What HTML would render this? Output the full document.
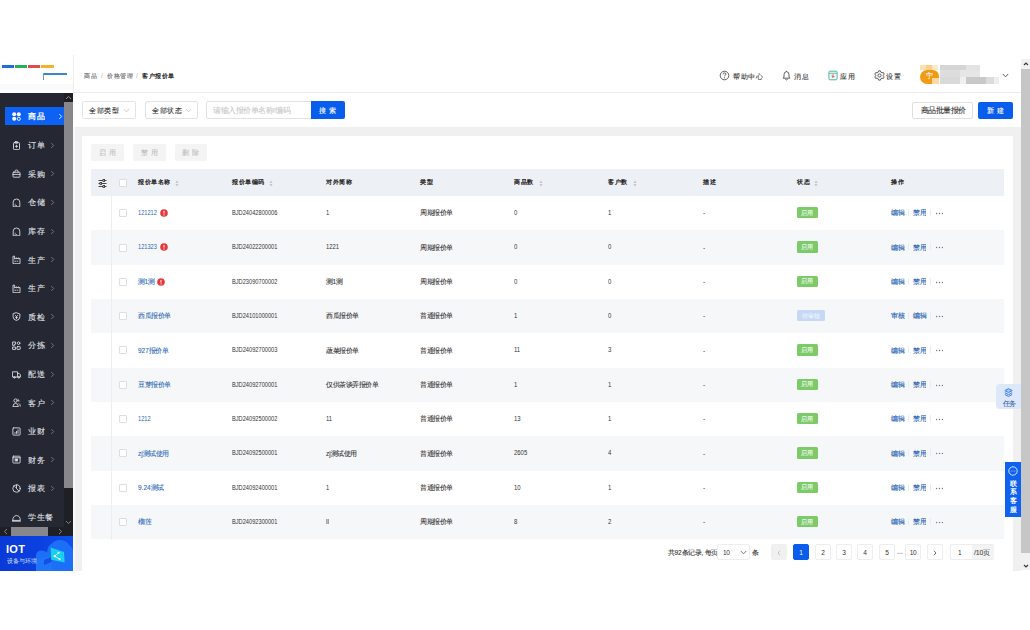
<!DOCTYPE html>
<html><head><meta charset="utf-8">
<style>
*{box-sizing:border-box;margin:0;padding:0}
html,body{width:1030px;height:630px;overflow:hidden;background:#fff;font-family:"Liberation Sans",sans-serif;color:#333}
.a{position:absolute}
.z{transform:scale(.5);transform-origin:0 0;white-space:nowrap}
.zc{transform:translateX(-50%) scale(.5);transform-origin:50% 0;white-space:nowrap}
</style></head><body>
<div class="a" style="left:0px;top:55px;width:73px;height:38px;background:#fff;"></div>
<div class="a" style="left:2px;top:65px;width:12px;height:3px;background:#1f6fd6;"></div>
<div class="a" style="left:15px;top:65px;width:12px;height:3px;background:#22b35a;"></div>
<div class="a" style="left:28px;top:65px;width:12px;height:3px;background:#e34b4b;"></div>
<div class="a" style="left:41px;top:65px;width:13px;height:3px;background:#f3b22b;"></div>
<div class="a" style="left:43px;top:73.2px;width:24px;height:1.6px;background:#3a86c8;"></div>
<div class="a" style="left:43px;top:73.2px;width:1px;height:6.5px;background:#5a9ad0;"></div>
<div class="a" style="left:0px;top:83.5px;width:73px;height:6.5px;background:#fafafa;"></div>
<div class="a" style="left:73px;top:55px;width:1px;height:38px;background:#ededed;"></div>
<div class="a" style="left:0px;top:93px;width:73px;height:434px;background:#252832;"></div>
<div class="a" style="left:64px;top:93px;width:9px;height:434px;background:#1e2026;"></div>
<div class="a" style="left:64px;top:102px;width:9px;height:386px;background:#87878c;"></div>
<svg class="a" style="left:65px;top:95px" width="7" height="5" viewBox="0 0 7 5"><path d="M1 4L3.5 1.4L6 4" stroke="#9a9aa0" stroke-width="0.9" fill="none"/></svg>
<svg class="a" style="left:65px;top:520px" width="7" height="5" viewBox="0 0 7 5"><path d="M1 1L3.5 3.6L6 1" stroke="#8a8a90" stroke-width="0.9" fill="none"/></svg>
<div class="a" style="left:0px;top:527px;width:73px;height:9px;background:#1e2026;"></div>
<div class="a" style="left:10.5px;top:527px;width:37.5px;height:9px;background:#87878c;"></div>
<svg class="a" style="left:3px;top:528px" width="5" height="7" viewBox="0 0 5 7"><path d="M4 1L1.4 3.5L4 6" stroke="#8a8a90" stroke-width="0.9" fill="none"/></svg>
<svg class="a" style="left:58px;top:528px" width="5" height="7" viewBox="0 0 5 7"><path d="M1 1L3.6 3.5L1 6" stroke="#8a8a90" stroke-width="0.9" fill="none"/></svg>
<div class="a" style="left:5px;top:107px;width:59px;height:18px;background:#0d62f5;"></div>
<svg class="a" style="left:12px;top:111.5px" width="9" height="9" viewBox="0 0 9 9"><circle cx="2.2" cy="2.2" r="2" fill="#fff"/><circle cx="6.8" cy="2.2" r="2" fill="#fff"/><circle cx="2.2" cy="6.8" r="2" fill="#fff"/><circle cx="6.8" cy="6.8" r="1.6" fill="none" stroke="#fff" stroke-width=".9"/></svg>
<div class="a z " style="left:27.5px;top:109.05px;font-size:16.80px;line-height:27px;color:#fff;font-weight:bold;letter-spacing:0.00px;">商品</div>
<svg class="a" style="left:58px;top:112.8px" width="5" height="7" viewBox="0 0 5 7"><path d="M1.3 1.1L3.7 3.5L1.3 5.9" stroke="#fff" stroke-width="0.85" fill="none"/></svg>
<svg class="a" style="left:12px;top:140.8px" width="9" height="9" viewBox="0 0 9 9"><g stroke="#d8dbe2" stroke-width="0.9" fill="none" stroke-linecap="round" stroke-linejoin="round"><rect x="1.5" y="1.6" width="6" height="7" rx="0.8"/><rect x="3.2" y="0.6" width="2.6" height="1.6" rx="0.4"/><path d="M4.5 4.2V6.4M3.4 5.3H5.6"/></g></svg>
<div class="a z " style="left:27.5px;top:138.15px;font-size:16.80px;line-height:27px;color:#e2e4ea;font-weight:500;letter-spacing:0.00px;;-webkit-text-stroke:0.18px currentColor">订单</div>
<svg class="a" style="left:50px;top:141.8px" width="5" height="7" viewBox="0 0 5 7"><path d="M1.3 1.1L3.7 3.5L1.3 5.9" stroke="#80838c" stroke-width="0.85" fill="none"/></svg>
<svg class="a" style="left:12px;top:169.4px" width="9" height="9" viewBox="0 0 9 9"><g stroke="#d8dbe2" stroke-width="0.9" fill="none" stroke-linecap="round" stroke-linejoin="round"><path d="M3 3.2V2.2Q3 1 4.5 1Q6 1 6 2.2V3.2"/><rect x="1" y="3.2" width="7" height="5" rx="0.6"/><path d="M1 5.4H8"/></g></svg>
<div class="a z " style="left:27.5px;top:166.75px;font-size:16.80px;line-height:27px;color:#e2e4ea;font-weight:500;letter-spacing:0.00px;;-webkit-text-stroke:0.18px currentColor">采购</div>
<svg class="a" style="left:50px;top:170.4px" width="5" height="7" viewBox="0 0 5 7"><path d="M1.3 1.1L3.7 3.5L1.3 5.9" stroke="#80838c" stroke-width="0.85" fill="none"/></svg>
<svg class="a" style="left:12px;top:198.0px" width="9" height="9" viewBox="0 0 9 9"><g stroke="#d8dbe2" stroke-width="0.9" fill="none" stroke-linecap="round" stroke-linejoin="round"><path d="M1.2 8.4V4.2Q1.2 1 4.5 1Q7.8 1 7.8 4.2V8.4z"/><path d="M3.2 6.2V6.3M3.2 7.6V7.7M4.5 7.6V7.7"/></g></svg>
<div class="a z " style="left:27.5px;top:195.35px;font-size:16.80px;line-height:27px;color:#e2e4ea;font-weight:500;letter-spacing:0.00px;;-webkit-text-stroke:0.18px currentColor">仓储</div>
<svg class="a" style="left:50px;top:199.0px" width="5" height="7" viewBox="0 0 5 7"><path d="M1.3 1.1L3.7 3.5L1.3 5.9" stroke="#80838c" stroke-width="0.85" fill="none"/></svg>
<svg class="a" style="left:12px;top:226.6px" width="9" height="9" viewBox="0 0 9 9"><g stroke="#d8dbe2" stroke-width="0.9" fill="none" stroke-linecap="round" stroke-linejoin="round"><path d="M1.2 8.4V4.2Q1.2 1 4.5 1Q7.8 1 7.8 4.2V8.4z"/><path d="M3.2 6.2V6.3M3.2 7.6V7.7M4.5 7.6V7.7"/></g></svg>
<div class="a z " style="left:27.5px;top:223.95px;font-size:16.80px;line-height:27px;color:#e2e4ea;font-weight:500;letter-spacing:0.00px;;-webkit-text-stroke:0.18px currentColor">库存</div>
<svg class="a" style="left:50px;top:227.6px" width="5" height="7" viewBox="0 0 5 7"><path d="M1.3 1.1L3.7 3.5L1.3 5.9" stroke="#80838c" stroke-width="0.85" fill="none"/></svg>
<svg class="a" style="left:12px;top:255.2px" width="9" height="9" viewBox="0 0 9 9"><g stroke="#d8dbe2" stroke-width="0.9" fill="none" stroke-linecap="round" stroke-linejoin="round"><path d="M1 8.3V1.2H2.6V4L4.6 2.8V4L6.6 2.8V4L8 3.4V8.3z"/><path d="M2.8 6.2H3.6M5 6.2H5.8"/></g></svg>
<div class="a z " style="left:27.5px;top:252.55px;font-size:16.80px;line-height:27px;color:#e2e4ea;font-weight:500;letter-spacing:0.00px;;-webkit-text-stroke:0.18px currentColor">生产</div>
<svg class="a" style="left:50px;top:256.2px" width="5" height="7" viewBox="0 0 5 7"><path d="M1.3 1.1L3.7 3.5L1.3 5.9" stroke="#80838c" stroke-width="0.85" fill="none"/></svg>
<svg class="a" style="left:12px;top:283.8px" width="9" height="9" viewBox="0 0 9 9"><g stroke="#d8dbe2" stroke-width="0.9" fill="none" stroke-linecap="round" stroke-linejoin="round"><path d="M1 8.3V1.2H2.6V4L4.6 2.8V4L6.6 2.8V4L8 3.4V8.3z"/><path d="M2.8 6.2H3.6M5 6.2H5.8"/></g></svg>
<div class="a z " style="left:27.5px;top:281.15px;font-size:16.80px;line-height:27px;color:#e2e4ea;font-weight:500;letter-spacing:0.00px;;-webkit-text-stroke:0.18px currentColor">生产</div>
<svg class="a" style="left:50px;top:284.8px" width="5" height="7" viewBox="0 0 5 7"><path d="M1.3 1.1L3.7 3.5L1.3 5.9" stroke="#80838c" stroke-width="0.85" fill="none"/></svg>
<svg class="a" style="left:12px;top:312.4px" width="9" height="9" viewBox="0 0 9 9"><g stroke="#d8dbe2" stroke-width="0.9" fill="none" stroke-linecap="round" stroke-linejoin="round"><path d="M4.5 0.8L7.9 2V4.8Q7.9 7.5 4.5 8.6Q1.1 7.5 1.1 4.8V2z"/><path d="M3.4 3.4L4.5 4.6L5.6 3.4M4.5 4.6V6.8M3.6 5.4H5.4"/></g></svg>
<div class="a z " style="left:27.5px;top:309.75px;font-size:16.80px;line-height:27px;color:#e2e4ea;font-weight:500;letter-spacing:0.00px;;-webkit-text-stroke:0.18px currentColor">质检</div>
<svg class="a" style="left:50px;top:313.4px" width="5" height="7" viewBox="0 0 5 7"><path d="M1.3 1.1L3.7 3.5L1.3 5.9" stroke="#80838c" stroke-width="0.85" fill="none"/></svg>
<svg class="a" style="left:12px;top:341.0px" width="9" height="9" viewBox="0 0 9 9"><g stroke="#d8dbe2" stroke-width="0.9" fill="none" stroke-linecap="round" stroke-linejoin="round"><path d="M1 1H3.6V3.2H2.4V4.4H1z"/><circle cx="6.6" cy="2.2" r="1.3"/><rect x="1" y="6" width="2.6" height="2.4"/><rect x="5" y="5.6" width="3.2" height="2.8" rx="0.4"/></g></svg>
<div class="a z " style="left:27.5px;top:338.35px;font-size:16.80px;line-height:27px;color:#e2e4ea;font-weight:500;letter-spacing:0.00px;;-webkit-text-stroke:0.18px currentColor">分拣</div>
<svg class="a" style="left:50px;top:342.0px" width="5" height="7" viewBox="0 0 5 7"><path d="M1.3 1.1L3.7 3.5L1.3 5.9" stroke="#80838c" stroke-width="0.85" fill="none"/></svg>
<svg class="a" style="left:12px;top:369.6px" width="9" height="9" viewBox="0 0 9 9"><g stroke="#d8dbe2" stroke-width="0.9" fill="none" stroke-linecap="round" stroke-linejoin="round"><path d="M0.8 1.8H5.6V7H0.8z"/><path d="M5.6 3.4H7.2L8.4 4.8V7H5.6"/><circle cx="2.4" cy="7.4" r="0.8"/><circle cx="6.8" cy="7.4" r="0.8"/></g></svg>
<div class="a z " style="left:27.5px;top:366.95px;font-size:16.80px;line-height:27px;color:#e2e4ea;font-weight:500;letter-spacing:0.00px;;-webkit-text-stroke:0.18px currentColor">配送</div>
<svg class="a" style="left:50px;top:370.6px" width="5" height="7" viewBox="0 0 5 7"><path d="M1.3 1.1L3.7 3.5L1.3 5.9" stroke="#80838c" stroke-width="0.85" fill="none"/></svg>
<svg class="a" style="left:12px;top:398.2px" width="9" height="9" viewBox="0 0 9 9"><g stroke="#d8dbe2" stroke-width="0.9" fill="none" stroke-linecap="round" stroke-linejoin="round"><circle cx="3.6" cy="2.6" r="1.7"/><path d="M0.9 8.2Q1 5.4 3.6 5.4Q6.2 5.4 6.3 8.2z"/><path d="M6 1.2Q7.2 1.6 7 3.4M7.2 5.6Q8.3 6.2 8.3 8.2"/></g></svg>
<div class="a z " style="left:27.5px;top:395.55px;font-size:16.80px;line-height:27px;color:#e2e4ea;font-weight:500;letter-spacing:0.00px;;-webkit-text-stroke:0.18px currentColor">客户</div>
<svg class="a" style="left:50px;top:399.2px" width="5" height="7" viewBox="0 0 5 7"><path d="M1.3 1.1L3.7 3.5L1.3 5.9" stroke="#80838c" stroke-width="0.85" fill="none"/></svg>
<svg class="a" style="left:12px;top:426.8px" width="9" height="9" viewBox="0 0 9 9"><g stroke="#d8dbe2" stroke-width="0.9" fill="none" stroke-linecap="round" stroke-linejoin="round"><rect x="0.9" y="0.9" width="7.2" height="7.2" rx="0.6"/><path d="M3 6.4V5.6M4.5 6.4V4.4M6 6.4V2.8"/></g></svg>
<div class="a z " style="left:27.5px;top:424.15px;font-size:16.80px;line-height:27px;color:#e2e4ea;font-weight:500;letter-spacing:0.00px;;-webkit-text-stroke:0.18px currentColor">业财</div>
<svg class="a" style="left:50px;top:427.8px" width="5" height="7" viewBox="0 0 5 7"><path d="M1.3 1.1L3.7 3.5L1.3 5.9" stroke="#80838c" stroke-width="0.85" fill="none"/></svg>
<svg class="a" style="left:12px;top:455.4px" width="9" height="9" viewBox="0 0 9 9"><g stroke="#d8dbe2" stroke-width="0.9" fill="none" stroke-linecap="round" stroke-linejoin="round"><rect x="0.9" y="1.2" width="7.2" height="6.8" rx="0.6"/><path d="M0.9 2.8H8.1"/><rect x="3.5" y="4" width="2" height="2" fill="#d8dbe2"/></g></svg>
<div class="a z " style="left:27.5px;top:452.75px;font-size:16.80px;line-height:27px;color:#e2e4ea;font-weight:500;letter-spacing:0.00px;;-webkit-text-stroke:0.18px currentColor">财务</div>
<svg class="a" style="left:50px;top:456.4px" width="5" height="7" viewBox="0 0 5 7"><path d="M1.3 1.1L3.7 3.5L1.3 5.9" stroke="#80838c" stroke-width="0.85" fill="none"/></svg>
<svg class="a" style="left:12px;top:484.0px" width="9" height="9" viewBox="0 0 9 9"><g stroke="#d8dbe2" stroke-width="0.9" fill="none" stroke-linecap="round" stroke-linejoin="round"><circle cx="4.5" cy="4.5" r="3.7"/><path d="M4.5 0.8V4.5L7 7.1"/><path d="M4.5 4.5L2.2 2" stroke-width="0.6"/></g></svg>
<div class="a z " style="left:27.5px;top:481.35px;font-size:16.80px;line-height:27px;color:#e2e4ea;font-weight:500;letter-spacing:0.00px;;-webkit-text-stroke:0.18px currentColor">报表</div>
<svg class="a" style="left:50px;top:485.0px" width="5" height="7" viewBox="0 0 5 7"><path d="M1.3 1.1L3.7 3.5L1.3 5.9" stroke="#80838c" stroke-width="0.85" fill="none"/></svg>
<svg class="a" style="left:12px;top:512.6px" width="9" height="9" viewBox="0 0 9 9"><g stroke="#d8dbe2" stroke-width="0.9" fill="none" stroke-linecap="round" stroke-linejoin="round"><path d="M0.7 7.4H8.3Q8.1 2.6 4.5 2.6Q0.9 2.6 0.7 7.4z"/><path d="M0.5 8.2H8.5"/></g></svg>
<div class="a z " style="left:27.5px;top:509.95px;font-size:16.80px;line-height:27px;color:#e2e4ea;font-weight:500;letter-spacing:0.00px;;-webkit-text-stroke:0.18px currentColor">学生餐</div>
<div class="a" style="left:0;top:536px;width:73px;height:35px;background:linear-gradient(90deg,#0a3ad6 0%,#0b40e0 55%,#0f50ee 100%);overflow:hidden">
<svg class="a" style="left:0;top:0" width="73" height="35" viewBox="0 0 73 35">
<path d="M36 35V20Q36 14.5 41.5 14.5Q45 14.5 47 16.5Q47.5 9.5 52 7.5Q54.5 4 60 4Q66.5 4 69.5 9.5Q73 11 73 16V35z" fill="#1c6ff6"/>
<path d="M36 35V24Q40 22 46 21L52 19V35z" fill="#2178fa" opacity="0.7"/>
<path d="M44 24L51.5 21V26L44 29z" fill="#0c47dc" opacity="0.8"/>
<path d="M50.6 11.6L64 16L64.7 26.6L51.2 23.7z" fill="#17d0ec"/>
<g stroke="#e9fbff" stroke-width="0.9" fill="none"><path d="M54.6 20.2L58.6 16.8M54.6 20.2L59.6 23"/></g>
<g fill="#fff"><circle cx="54.6" cy="20.2" r="1.1"/><circle cx="58.6" cy="16.8" r="1"/><circle cx="59.6" cy="23" r="1"/></g>
</svg></div>
<div class="a z " style="left:6.3px;top:540.25px;font-size:22.00px;line-height:35px;color:#fff;font-weight:bold;letter-spacing:0.60px;">IOT</div>
<div class="a z " style="left:7px;top:556.00px;font-size:12.40px;line-height:20px;color:#d6e0ff;font-weight:500;letter-spacing:0.00px;-webkit-text-stroke:0">设备与环境</div>
<div class="a" style="left:74px;top:55px;width:947px;height:37px;background:#fff;"></div>
<div class="a" style="left:74px;top:92px;width:947px;height:1px;background:#ececec;"></div>
<div class="a z " style="left:84px;top:71.00px;font-size:12.80px;line-height:20px;color:#6e6e6e;font-weight:500;letter-spacing:0.00px;-webkit-text-stroke:0.3px currentColor">商品</div>
<div class="a z " style="left:100.5px;top:71.00px;font-size:12.80px;line-height:20px;color:#b0b0b0;font-weight:500;letter-spacing:0.00px;">/</div>
<div class="a z " style="left:107px;top:71.00px;font-size:12.80px;line-height:20px;color:#6e6e6e;font-weight:500;letter-spacing:0.00px;-webkit-text-stroke:0.3px currentColor">价格管理</div>
<div class="a z " style="left:135.5px;top:71.00px;font-size:12.80px;line-height:20px;color:#b0b0b0;font-weight:500;letter-spacing:0.00px;">/</div>
<div class="a z " style="left:142px;top:71.00px;font-size:12.80px;line-height:20px;color:#1d1d1d;font-weight:500;letter-spacing:0.00px;-webkit-text-stroke:0.5px currentColor">客户报价单</div>
<svg class="a" style="left:719px;top:70px" width="11" height="11" viewBox="0 0 11 11"><circle cx="5.5" cy="5.5" r="4.3" fill="none" stroke="#3a3a3a" stroke-width="0.8"/><path d="M4.1 4.3Q4.1 2.9 5.5 2.9Q6.9 2.9 6.9 4.1Q6.9 4.9 5.9 5.4Q5.5 5.6 5.5 6.3" fill="none" stroke="#3a3a3a" stroke-width="0.8"/><circle cx="5.5" cy="7.7" r=".5" fill="#3a3a3a"/></svg>
<div class="a z " style="left:733px;top:69.60px;font-size:14.90px;line-height:24px;color:#2e2e2e;font-weight:500;letter-spacing:0.00px;;-webkit-text-stroke:0.18px currentColor">帮助中心</div>
<svg class="a" style="left:782px;top:70px" width="9" height="11" viewBox="0 0 9 11"><path d="M1.2 8.2H7.8L7 7V4.6Q7 2 4.5 1.6Q2 2 2 4.6V7z" fill="none" stroke="#3a3a3a" stroke-width="0.8" stroke-linejoin="round"/><path d="M3.4 9.4Q4.5 10.4 5.6 9.4" fill="none" stroke="#3a3a3a" stroke-width="0.8"/><path d="M4.5 0.8V1.6" stroke="#3a3a3a" stroke-width="0.8"/></svg>
<div class="a z " style="left:794px;top:69.60px;font-size:14.90px;line-height:24px;color:#2e2e2e;font-weight:500;letter-spacing:0.00px;;-webkit-text-stroke:0.18px currentColor">消息</div>
<svg class="a" style="left:828px;top:70px" width="10" height="11" viewBox="0 0 10 11"><rect x="0.9" y="1.2" width="8.2" height="8.6" rx="1" fill="#eef9f6" stroke="#3fb49b" stroke-width="0.9"/><path d="M0.9 3.3H9.1" stroke="#3fb49b" stroke-width="0.8"/><path d="M5 4.4V7.2M3.6 6L5 7.4L6.4 6" fill="none" stroke="#e5484d" stroke-width="1"/></svg>
<div class="a z " style="left:840px;top:69.60px;font-size:14.90px;line-height:24px;color:#2e2e2e;font-weight:500;letter-spacing:0.00px;;-webkit-text-stroke:0.18px currentColor">应用</div>
<svg class="a" style="left:874px;top:70px" width="11" height="11" viewBox="0 0 11 11"><path d="M4.6 0.9H6.4L6.8 2.2L8 2.9L9.3 2.5L10.2 4.1L9.2 5.1V5.9L10.2 6.9L9.3 8.5L8 8.1L6.8 8.8L6.4 10.1H4.6L4.2 8.8L3 8.1L1.7 8.5L0.8 6.9L1.8 5.9V5.1L0.8 4.1L1.7 2.5L3 2.9L4.2 2.2z" fill="none" stroke="#3a3a3a" stroke-width="0.8" stroke-linejoin="round"/><circle cx="5.5" cy="5.5" r="1.6" fill="none" stroke="#3a3a3a" stroke-width="0.8"/></svg>
<div class="a z " style="left:886px;top:69.60px;font-size:14.90px;line-height:24px;color:#2e2e2e;font-weight:500;letter-spacing:0.00px;;-webkit-text-stroke:0.18px currentColor">设置</div>
<div class="a" style="left:920px;top:65px;width:6px;height:5px;background:#fbe0b3;"></div>
<div class="a" style="left:926px;top:65px;width:6px;height:5px;background:#f9cf8a;"></div>
<div class="a" style="left:932px;top:65px;width:6px;height:5px;background:#fde9c8;"></div>
<div class="a" style="left:940px;top:65px;width:26px;height:5px;background:#d5d5d5;"></div>
<div class="a" style="left:966px;top:65px;width:14px;height:5px;background:#e3e3e3;"></div>
<div class="a" style="left:940px;top:70px;width:20px;height:7px;background:#dddddd;"></div>
<div class="a" style="left:960px;top:70px;width:20px;height:7px;background:#e6e6e6;"></div>
<div class="a" style="left:940px;top:77px;width:20px;height:7px;background:#d9d9d9;"></div>
<div class="a" style="left:960px;top:77px;width:6px;height:7px;background:#f0f0f0;"></div>
<div class="a" style="left:966px;top:77px;width:20px;height:7px;background:#c9c9c9;"></div>
<div class="a" style="left:986px;top:77px;width:8px;height:7px;background:#dcdcdc;"></div>
<div class="a" style="left:994px;top:77px;width:5px;height:7px;background:#eeeeee;"></div>
<div class="a" style="left:920px;top:70px;width:19px;height:14px;background:#f29a12;border-radius:8px 7px 2px 8px"></div>
<div class="a" style="left:932px;top:78px;width:7px;height:6px;background:#fbd9a6;"></div>
<div class="a z " style="left:926px;top:70.00px;font-size:14.00px;line-height:22px;color:#fff;font-weight:500;letter-spacing:0.00px;;-webkit-text-stroke:0.18px currentColor">宁</div>
<svg class="a" style="left:1002px;top:73px" width="7" height="5" viewBox="0 0 7 5"><path d="M0.8 1L3.5 3.8L6.2 1" stroke="#444" stroke-width="0.9" fill="none"/></svg>
<div class="a" style="left:74px;top:93px;width:947px;height:34px;background:#fff;"></div>
<div class="a" style="left:82px;top:101px;width:54px;height:17.5px;border:1px solid #e4e4e4;border-radius:1.5px"></div>
<div class="a z " style="left:89px;top:104.85px;font-size:14.60px;line-height:23px;color:#262626;font-weight:500;letter-spacing:0.00px;;-webkit-text-stroke:0.18px currentColor">全部类型</div>
<svg class="a" style="left:123px;top:107.5px" width="7" height="5" viewBox="0 0 7 5"><path d="M0.8 1L3.5 3.8L6.2 1" stroke="#b8b8b8" stroke-width="0.7" fill="none"/></svg>
<div class="a" style="left:145px;top:101px;width:53px;height:17.5px;border:1px solid #e2e2e2;border-radius:2px"></div>
<div class="a z " style="left:152px;top:104.85px;font-size:14.60px;line-height:23px;color:#262626;font-weight:500;letter-spacing:0.00px;;-webkit-text-stroke:0.18px currentColor">全部状态</div>
<svg class="a" style="left:185px;top:107.5px" width="7" height="5" viewBox="0 0 7 5"><path d="M0.8 1L3.5 3.8L6.2 1" stroke="#b8b8b8" stroke-width="0.7" fill="none"/></svg>
<div class="a" style="left:206px;top:101px;width:106px;height:17.5px;border:1px solid #e2e2e2;border-radius:2px 0 0 2px"></div>
<div class="a z " style="left:213px;top:104.40px;font-size:15.00px;line-height:24px;color:#c8c8c8;font-weight:500;letter-spacing:0.00px;;-webkit-text-stroke:0.18px currentColor">请输入报价单名称/编码</div>
<div class="a" style="left:311px;top:101px;width:34px;height:17.5px;background:#095ded;border-radius:0 2px 2px 0"></div>
<div class="a zc" style="left:328.4px;top:104.50px;font-size:13.60px;line-height:22px;color:#fff;font-weight:500;letter-spacing:1.40px;;-webkit-text-stroke:0.18px currentColor">搜&nbsp;索</div>
<div class="a" style="left:912px;top:101.5px;width:61px;height:17.5px;border:1px solid #e0e0e0;border-radius:2px;background:#fff"></div>
<div class="a zc" style="left:942.5px;top:104.30px;font-size:15.00px;line-height:24px;color:#2a2a2a;font-weight:500;letter-spacing:0.00px;;-webkit-text-stroke:0.18px currentColor">商品批量报价</div>
<div class="a" style="left:978px;top:101.5px;width:35px;height:17.5px;background:#095ded;border-radius:2px"></div>
<div class="a zc" style="left:995.7px;top:104.80px;font-size:13.60px;line-height:22px;color:#fff;font-weight:500;letter-spacing:1.40px;;-webkit-text-stroke:0.18px currentColor">新&nbsp;建</div>
<div class="a" style="left:74px;top:127px;width:947px;height:444px;background:#f0f0f1;"></div>
<div class="a" style="left:73px;top:127px;width:2px;height:444px;background:#f8f8f8;"></div>
<div class="a" style="left:82px;top:136px;width:931px;height:435px;background:#fff;"></div>
<div class="a" style="left:91px;top:144px;width:33px;height:17px;background:#f4f4f4;border-radius:2px"></div>
<div class="a zc" style="left:107.5px;top:147.25px;font-size:13.20px;line-height:21px;color:#bdbdbd;font-weight:500;letter-spacing:2.00px;;-webkit-text-stroke:0.18px currentColor">启&nbsp;用</div>
<div class="a" style="left:133px;top:144px;width:33px;height:17px;background:#f4f4f4;border-radius:2px"></div>
<div class="a zc" style="left:149.5px;top:147.25px;font-size:13.20px;line-height:21px;color:#bdbdbd;font-weight:500;letter-spacing:2.00px;;-webkit-text-stroke:0.18px currentColor">禁&nbsp;用</div>
<div class="a" style="left:175px;top:144px;width:32px;height:17px;background:#f4f4f4;border-radius:2px"></div>
<div class="a zc" style="left:191.0px;top:147.25px;font-size:13.20px;line-height:21px;color:#bdbdbd;font-weight:500;letter-spacing:2.00px;;-webkit-text-stroke:0.18px currentColor">删&nbsp;除</div>
<div class="a" style="left:91px;top:169.3px;width:913px;height:26.7px;background:#edf0f5;"></div>
<svg class="a" style="left:98px;top:178.5px" width="9" height="9" viewBox="0 0 9 9"><g stroke="#333" stroke-width="0.9" fill="none"><path d="M0.5 1.5H8.5M0.5 4.5H8.5M0.5 7.5H8.5"/></g><g fill="#edf0f5" stroke="#333" stroke-width="0.8"><rect x="5" y="0.5" width="1.6" height="2"/><rect x="2" y="3.5" width="1.6" height="2"/><rect x="5" y="6.5" width="1.6" height="2"/></g></svg>
<div class="a" style="left:119px;top:178.7px;width:8px;height:8px;border:1px solid #dedede;background:#fff;border-radius:1px"></div>
<div class="a z " style="left:138px;top:177.40px;font-size:12.80px;line-height:20px;color:#1f1f1f;font-weight:500;letter-spacing:0.00px;-webkit-text-stroke:0.55px currentColor">报价单名称</div>
<svg class="a" style="left:175.3px;top:179.5px" width="4" height="7" viewBox="0 0 4 7"><path d="M2 0.6L3.6 2.9H0.4z M2 6.4L3.6 4.1H0.4z" fill="#c2c6ce"/></svg>
<div class="a z " style="left:232px;top:177.40px;font-size:12.80px;line-height:20px;color:#1f1f1f;font-weight:500;letter-spacing:0.00px;-webkit-text-stroke:0.55px currentColor">报价单编码</div>
<svg class="a" style="left:268.5px;top:179.5px" width="4" height="7" viewBox="0 0 4 7"><path d="M2 0.6L3.6 2.9H0.4z M2 6.4L3.6 4.1H0.4z" fill="#c2c6ce"/></svg>
<div class="a z " style="left:326px;top:177.40px;font-size:12.80px;line-height:20px;color:#1f1f1f;font-weight:500;letter-spacing:0.00px;-webkit-text-stroke:0.55px currentColor">对外简称</div>
<div class="a z " style="left:420px;top:177.40px;font-size:12.80px;line-height:20px;color:#1f1f1f;font-weight:500;letter-spacing:0.00px;-webkit-text-stroke:0.55px currentColor">类型</div>
<div class="a z " style="left:514px;top:177.40px;font-size:12.80px;line-height:20px;color:#1f1f1f;font-weight:500;letter-spacing:0.00px;-webkit-text-stroke:0.55px currentColor">商品数</div>
<svg class="a" style="left:538.5px;top:179.5px" width="4" height="7" viewBox="0 0 4 7"><path d="M2 0.6L3.6 2.9H0.4z M2 6.4L3.6 4.1H0.4z" fill="#c2c6ce"/></svg>
<div class="a z " style="left:608px;top:177.40px;font-size:12.80px;line-height:20px;color:#1f1f1f;font-weight:500;letter-spacing:0.00px;-webkit-text-stroke:0.55px currentColor">客户数</div>
<svg class="a" style="left:632.7px;top:179.5px" width="4" height="7" viewBox="0 0 4 7"><path d="M2 0.6L3.6 2.9H0.4z M2 6.4L3.6 4.1H0.4z" fill="#c2c6ce"/></svg>
<div class="a z " style="left:703px;top:177.40px;font-size:12.80px;line-height:20px;color:#1f1f1f;font-weight:500;letter-spacing:0.00px;-webkit-text-stroke:0.55px currentColor">描述</div>
<div class="a z " style="left:797px;top:177.40px;font-size:12.80px;line-height:20px;color:#1f1f1f;font-weight:500;letter-spacing:0.00px;-webkit-text-stroke:0.55px currentColor">状态</div>
<svg class="a" style="left:814.3px;top:179.5px" width="4" height="7" viewBox="0 0 4 7"><path d="M2 0.6L3.6 2.9H0.4z M2 6.4L3.6 4.1H0.4z" fill="#c2c6ce"/></svg>
<div class="a z " style="left:891px;top:177.40px;font-size:12.80px;line-height:20px;color:#1f1f1f;font-weight:500;letter-spacing:0.00px;-webkit-text-stroke:0.55px currentColor">操作</div>
<div class="a" style="left:119px;top:209.2px;width:8px;height:8px;border:1px solid #dedede;background:#fff;border-radius:1px"></div>
<div class="a z " style="left:138px;top:207.16px;font-size:14.00px;line-height:22px;color:#2c69b6;font-weight:500;letter-spacing:0.00px;;transform:scale(0.4050,.5)">121212</div>
<svg class="a" style="left:160px;top:208.86px" width="8" height="8" viewBox="0 0 8 8"><circle cx="4" cy="4" r="3.8" fill="#e5393c"/><path d="M4 1.9V4.6" stroke="#fff" stroke-width="1"/><circle cx="4" cy="5.9" r=".55" fill="#fff"/></svg>
<div class="a z " style="left:232px;top:207.16px;font-size:14.00px;line-height:22px;color:#333;font-weight:500;letter-spacing:0.00px;;transform:scale(0.4050,.5)">BJD24042800006</div>
<div class="a z " style="left:326px;top:207.16px;font-size:14.00px;line-height:22px;color:#333;font-weight:500;letter-spacing:0.00px;;transform:scale(0.4150,.5)">1</div>
<div class="a z " style="left:420px;top:207.41px;font-size:13.00px;line-height:21px;color:#333;font-weight:500;letter-spacing:0.00px;;-webkit-text-stroke:0.18px currentColor">周期报价单</div>
<div class="a z " style="left:514px;top:207.16px;font-size:14.00px;line-height:22px;color:#333;font-weight:500;letter-spacing:0.00px;;transform:scale(0.4250,.5)">0</div>
<div class="a z " style="left:608px;top:207.16px;font-size:14.00px;line-height:22px;color:#333;font-weight:500;letter-spacing:0.00px;;transform:scale(0.4250,.5)">1</div>
<div class="a z " style="left:703px;top:207.41px;font-size:13.00px;line-height:21px;color:#333;font-weight:500;letter-spacing:0.00px;">-</div>
<div class="a" style="left:796.5px;top:206.96px;width:21.5px;height:11.5px;background:#7cca68;border-radius:1.5px"></div>
<div class="a zc" style="left:807.25px;top:207.66px;font-size:12.40px;line-height:20px;color:#f4fbf1;font-weight:500;letter-spacing:0.00px;;-webkit-text-stroke:0.18px currentColor">启用</div>
<div class="a z " style="left:891px;top:207.41px;font-size:13.00px;line-height:21px;color:#2c69b6;font-weight:500;letter-spacing:0.00px;-webkit-text-stroke:0.3px currentColor">编辑</div>
<div class="a" style="left:908.3px;top:209.16px;width:1px;height:7px;background:#ececec;"></div>
<div class="a z " style="left:913px;top:207.41px;font-size:13.00px;line-height:21px;color:#2c69b6;font-weight:500;letter-spacing:0.00px;-webkit-text-stroke:0.3px currentColor">禁用</div>
<div class="a" style="left:930px;top:209.16px;width:1px;height:7px;background:#ececec;"></div>
<svg class="a" style="left:935px;top:211.96px" width="9" height="3" viewBox="0 0 9 3"><g fill="#6a7487"><circle cx="1.6" cy="1.5" r=".65"/><circle cx="4.5" cy="1.5" r=".65"/><circle cx="7.4" cy="1.5" r=".65"/></g></svg>
<div class="a" style="left:91px;top:230.32px;width:913px;height:34.32px;background:#f6f7f9;"></div>
<div class="a" style="left:119px;top:243.5px;width:8px;height:8px;border:1px solid #dedede;background:#fff;border-radius:1px"></div>
<div class="a z " style="left:138px;top:241.48px;font-size:14.00px;line-height:22px;color:#2c69b6;font-weight:500;letter-spacing:0.00px;;transform:scale(0.4050,.5)">121323</div>
<svg class="a" style="left:160px;top:243.18px" width="8" height="8" viewBox="0 0 8 8"><circle cx="4" cy="4" r="3.8" fill="#e5393c"/><path d="M4 1.9V4.6" stroke="#fff" stroke-width="1"/><circle cx="4" cy="5.9" r=".55" fill="#fff"/></svg>
<div class="a z " style="left:232px;top:241.48px;font-size:14.00px;line-height:22px;color:#333;font-weight:500;letter-spacing:0.00px;;transform:scale(0.4050,.5)">BJD24022200001</div>
<div class="a z " style="left:326px;top:241.48px;font-size:14.00px;line-height:22px;color:#333;font-weight:500;letter-spacing:0.00px;;transform:scale(0.4150,.5)">1221</div>
<div class="a z " style="left:420px;top:241.73px;font-size:13.00px;line-height:21px;color:#333;font-weight:500;letter-spacing:0.00px;;-webkit-text-stroke:0.18px currentColor">周期报价单</div>
<div class="a z " style="left:514px;top:241.48px;font-size:14.00px;line-height:22px;color:#333;font-weight:500;letter-spacing:0.00px;;transform:scale(0.4250,.5)">0</div>
<div class="a z " style="left:608px;top:241.48px;font-size:14.00px;line-height:22px;color:#333;font-weight:500;letter-spacing:0.00px;;transform:scale(0.4250,.5)">0</div>
<div class="a z " style="left:703px;top:241.73px;font-size:13.00px;line-height:21px;color:#333;font-weight:500;letter-spacing:0.00px;">-</div>
<div class="a" style="left:796.5px;top:241.28px;width:21.5px;height:11.5px;background:#7cca68;border-radius:1.5px"></div>
<div class="a zc" style="left:807.25px;top:241.98px;font-size:12.40px;line-height:20px;color:#f4fbf1;font-weight:500;letter-spacing:0.00px;;-webkit-text-stroke:0.18px currentColor">启用</div>
<div class="a z " style="left:891px;top:241.73px;font-size:13.00px;line-height:21px;color:#2c69b6;font-weight:500;letter-spacing:0.00px;-webkit-text-stroke:0.3px currentColor">编辑</div>
<div class="a" style="left:908.3px;top:243.48px;width:1px;height:7px;background:#ececec;"></div>
<div class="a z " style="left:913px;top:241.73px;font-size:13.00px;line-height:21px;color:#2c69b6;font-weight:500;letter-spacing:0.00px;-webkit-text-stroke:0.3px currentColor">禁用</div>
<div class="a" style="left:930px;top:243.48px;width:1px;height:7px;background:#ececec;"></div>
<svg class="a" style="left:935px;top:246.28px" width="9" height="3" viewBox="0 0 9 3"><g fill="#6a7487"><circle cx="1.6" cy="1.5" r=".65"/><circle cx="4.5" cy="1.5" r=".65"/><circle cx="7.4" cy="1.5" r=".65"/></g></svg>
<div class="a" style="left:119px;top:277.8px;width:8px;height:8px;border:1px solid #dedede;background:#fff;border-radius:1px"></div>
<div class="a z " style="left:138px;top:276.05px;font-size:13.00px;line-height:21px;color:#2c69b6;font-weight:500;letter-spacing:0.00px;;-webkit-text-stroke:0.18px currentColor">测1测</div>
<svg class="a" style="left:157px;top:277.50px" width="8" height="8" viewBox="0 0 8 8"><circle cx="4" cy="4" r="3.8" fill="#e5393c"/><path d="M4 1.9V4.6" stroke="#fff" stroke-width="1"/><circle cx="4" cy="5.9" r=".55" fill="#fff"/></svg>
<div class="a z " style="left:232px;top:275.80px;font-size:14.00px;line-height:22px;color:#333;font-weight:500;letter-spacing:0.00px;;transform:scale(0.4050,.5)">BJD23090700002</div>
<div class="a z " style="left:326px;top:276.05px;font-size:13.00px;line-height:21px;color:#333;font-weight:500;letter-spacing:0.00px;;-webkit-text-stroke:0.18px currentColor">测1测</div>
<div class="a z " style="left:420px;top:276.05px;font-size:13.00px;line-height:21px;color:#333;font-weight:500;letter-spacing:0.00px;;-webkit-text-stroke:0.18px currentColor">周期报价单</div>
<div class="a z " style="left:514px;top:275.80px;font-size:14.00px;line-height:22px;color:#333;font-weight:500;letter-spacing:0.00px;;transform:scale(0.4250,.5)">0</div>
<div class="a z " style="left:608px;top:275.80px;font-size:14.00px;line-height:22px;color:#333;font-weight:500;letter-spacing:0.00px;;transform:scale(0.4250,.5)">0</div>
<div class="a z " style="left:703px;top:276.05px;font-size:13.00px;line-height:21px;color:#333;font-weight:500;letter-spacing:0.00px;">-</div>
<div class="a" style="left:796.5px;top:275.60px;width:21.5px;height:11.5px;background:#7cca68;border-radius:1.5px"></div>
<div class="a zc" style="left:807.25px;top:276.30px;font-size:12.40px;line-height:20px;color:#f4fbf1;font-weight:500;letter-spacing:0.00px;;-webkit-text-stroke:0.18px currentColor">启用</div>
<div class="a z " style="left:891px;top:276.05px;font-size:13.00px;line-height:21px;color:#2c69b6;font-weight:500;letter-spacing:0.00px;-webkit-text-stroke:0.3px currentColor">编辑</div>
<div class="a" style="left:908.3px;top:277.80px;width:1px;height:7px;background:#ececec;"></div>
<div class="a z " style="left:913px;top:276.05px;font-size:13.00px;line-height:21px;color:#2c69b6;font-weight:500;letter-spacing:0.00px;-webkit-text-stroke:0.3px currentColor">禁用</div>
<div class="a" style="left:930px;top:277.80px;width:1px;height:7px;background:#ececec;"></div>
<svg class="a" style="left:935px;top:280.60px" width="9" height="3" viewBox="0 0 9 3"><g fill="#6a7487"><circle cx="1.6" cy="1.5" r=".65"/><circle cx="4.5" cy="1.5" r=".65"/><circle cx="7.4" cy="1.5" r=".65"/></g></svg>
<div class="a" style="left:91px;top:298.96px;width:913px;height:34.32px;background:#f6f7f9;"></div>
<div class="a" style="left:119px;top:312.1px;width:8px;height:8px;border:1px solid #dedede;background:#fff;border-radius:1px"></div>
<div class="a z " style="left:138px;top:310.37px;font-size:13.00px;line-height:21px;color:#2c69b6;font-weight:500;letter-spacing:0.00px;;-webkit-text-stroke:0.18px currentColor">西瓜报价单</div>
<div class="a z " style="left:232px;top:310.12px;font-size:14.00px;line-height:22px;color:#333;font-weight:500;letter-spacing:0.00px;;transform:scale(0.4050,.5)">BJD24101000001</div>
<div class="a z " style="left:326px;top:310.37px;font-size:13.00px;line-height:21px;color:#333;font-weight:500;letter-spacing:0.00px;;-webkit-text-stroke:0.18px currentColor">西瓜报价单</div>
<div class="a z " style="left:420px;top:310.37px;font-size:13.00px;line-height:21px;color:#333;font-weight:500;letter-spacing:0.00px;;-webkit-text-stroke:0.18px currentColor">普通报价单</div>
<div class="a z " style="left:514px;top:310.12px;font-size:14.00px;line-height:22px;color:#333;font-weight:500;letter-spacing:0.00px;;transform:scale(0.4250,.5)">1</div>
<div class="a z " style="left:608px;top:310.12px;font-size:14.00px;line-height:22px;color:#333;font-weight:500;letter-spacing:0.00px;;transform:scale(0.4250,.5)">0</div>
<div class="a z " style="left:703px;top:310.37px;font-size:13.00px;line-height:21px;color:#333;font-weight:500;letter-spacing:0.00px;">-</div>
<div class="a" style="left:796.5px;top:309.92px;width:28px;height:11.5px;background:#c5d8f6;border-radius:1.5px"></div>
<div class="a zc" style="left:810.5px;top:310.62px;font-size:12.40px;line-height:20px;color:#eef4fd;font-weight:500;letter-spacing:0.00px;;-webkit-text-stroke:0.18px currentColor">待审核</div>
<div class="a z " style="left:891px;top:310.37px;font-size:13.00px;line-height:21px;color:#2c69b6;font-weight:500;letter-spacing:0.00px;-webkit-text-stroke:0.3px currentColor">审核</div>
<div class="a" style="left:908.3px;top:312.12px;width:1px;height:7px;background:#ececec;"></div>
<div class="a z " style="left:913px;top:310.37px;font-size:13.00px;line-height:21px;color:#2c69b6;font-weight:500;letter-spacing:0.00px;-webkit-text-stroke:0.3px currentColor">编辑</div>
<div class="a" style="left:930px;top:312.12px;width:1px;height:7px;background:#ececec;"></div>
<svg class="a" style="left:935px;top:314.92px" width="9" height="3" viewBox="0 0 9 3"><g fill="#6a7487"><circle cx="1.6" cy="1.5" r=".65"/><circle cx="4.5" cy="1.5" r=".65"/><circle cx="7.4" cy="1.5" r=".65"/></g></svg>
<div class="a" style="left:119px;top:346.4px;width:8px;height:8px;border:1px solid #dedede;background:#fff;border-radius:1px"></div>
<div class="a z " style="left:138px;top:344.69px;font-size:13.00px;line-height:21px;color:#2c69b6;font-weight:500;letter-spacing:0.00px;;-webkit-text-stroke:0.18px currentColor">927报价单</div>
<div class="a z " style="left:232px;top:344.44px;font-size:14.00px;line-height:22px;color:#333;font-weight:500;letter-spacing:0.00px;;transform:scale(0.4050,.5)">BJD24092700003</div>
<div class="a z " style="left:326px;top:344.69px;font-size:13.00px;line-height:21px;color:#333;font-weight:500;letter-spacing:0.00px;;-webkit-text-stroke:0.18px currentColor">蔬菜报价单</div>
<div class="a z " style="left:420px;top:344.69px;font-size:13.00px;line-height:21px;color:#333;font-weight:500;letter-spacing:0.00px;;-webkit-text-stroke:0.18px currentColor">普通报价单</div>
<div class="a z " style="left:514px;top:344.44px;font-size:14.00px;line-height:22px;color:#333;font-weight:500;letter-spacing:0.00px;;transform:scale(0.4250,.5)">11</div>
<div class="a z " style="left:608px;top:344.44px;font-size:14.00px;line-height:22px;color:#333;font-weight:500;letter-spacing:0.00px;;transform:scale(0.4250,.5)">3</div>
<div class="a z " style="left:703px;top:344.69px;font-size:13.00px;line-height:21px;color:#333;font-weight:500;letter-spacing:0.00px;">-</div>
<div class="a" style="left:796.5px;top:344.24px;width:21.5px;height:11.5px;background:#7cca68;border-radius:1.5px"></div>
<div class="a zc" style="left:807.25px;top:344.94px;font-size:12.40px;line-height:20px;color:#f4fbf1;font-weight:500;letter-spacing:0.00px;;-webkit-text-stroke:0.18px currentColor">启用</div>
<div class="a z " style="left:891px;top:344.69px;font-size:13.00px;line-height:21px;color:#2c69b6;font-weight:500;letter-spacing:0.00px;-webkit-text-stroke:0.3px currentColor">编辑</div>
<div class="a" style="left:908.3px;top:346.44px;width:1px;height:7px;background:#ececec;"></div>
<div class="a z " style="left:913px;top:344.69px;font-size:13.00px;line-height:21px;color:#2c69b6;font-weight:500;letter-spacing:0.00px;-webkit-text-stroke:0.3px currentColor">禁用</div>
<div class="a" style="left:930px;top:346.44px;width:1px;height:7px;background:#ececec;"></div>
<svg class="a" style="left:935px;top:349.24px" width="9" height="3" viewBox="0 0 9 3"><g fill="#6a7487"><circle cx="1.6" cy="1.5" r=".65"/><circle cx="4.5" cy="1.5" r=".65"/><circle cx="7.4" cy="1.5" r=".65"/></g></svg>
<div class="a" style="left:91px;top:367.60px;width:913px;height:34.32px;background:#f6f7f9;"></div>
<div class="a" style="left:119px;top:380.8px;width:8px;height:8px;border:1px solid #dedede;background:#fff;border-radius:1px"></div>
<div class="a z " style="left:138px;top:379.01px;font-size:13.00px;line-height:21px;color:#2c69b6;font-weight:500;letter-spacing:0.00px;;-webkit-text-stroke:0.18px currentColor">豆芽报价单</div>
<div class="a z " style="left:232px;top:378.76px;font-size:14.00px;line-height:22px;color:#333;font-weight:500;letter-spacing:0.00px;;transform:scale(0.4050,.5)">BJD24092700001</div>
<div class="a z " style="left:326px;top:379.01px;font-size:13.00px;line-height:21px;color:#333;font-weight:500;letter-spacing:0.00px;;-webkit-text-stroke:0.18px currentColor">仅供茶谈弄报价单</div>
<div class="a z " style="left:420px;top:379.01px;font-size:13.00px;line-height:21px;color:#333;font-weight:500;letter-spacing:0.00px;;-webkit-text-stroke:0.18px currentColor">普通报价单</div>
<div class="a z " style="left:514px;top:378.76px;font-size:14.00px;line-height:22px;color:#333;font-weight:500;letter-spacing:0.00px;;transform:scale(0.4250,.5)">1</div>
<div class="a z " style="left:608px;top:378.76px;font-size:14.00px;line-height:22px;color:#333;font-weight:500;letter-spacing:0.00px;;transform:scale(0.4250,.5)">1</div>
<div class="a z " style="left:703px;top:379.01px;font-size:13.00px;line-height:21px;color:#333;font-weight:500;letter-spacing:0.00px;">-</div>
<div class="a" style="left:796.5px;top:378.56px;width:21.5px;height:11.5px;background:#7cca68;border-radius:1.5px"></div>
<div class="a zc" style="left:807.25px;top:379.26px;font-size:12.40px;line-height:20px;color:#f4fbf1;font-weight:500;letter-spacing:0.00px;;-webkit-text-stroke:0.18px currentColor">启用</div>
<div class="a z " style="left:891px;top:379.01px;font-size:13.00px;line-height:21px;color:#2c69b6;font-weight:500;letter-spacing:0.00px;-webkit-text-stroke:0.3px currentColor">编辑</div>
<div class="a" style="left:908.3px;top:380.76px;width:1px;height:7px;background:#ececec;"></div>
<div class="a z " style="left:913px;top:379.01px;font-size:13.00px;line-height:21px;color:#2c69b6;font-weight:500;letter-spacing:0.00px;-webkit-text-stroke:0.3px currentColor">禁用</div>
<div class="a" style="left:930px;top:380.76px;width:1px;height:7px;background:#ececec;"></div>
<svg class="a" style="left:935px;top:383.56px" width="9" height="3" viewBox="0 0 9 3"><g fill="#6a7487"><circle cx="1.6" cy="1.5" r=".65"/><circle cx="4.5" cy="1.5" r=".65"/><circle cx="7.4" cy="1.5" r=".65"/></g></svg>
<div class="a" style="left:119px;top:415.1px;width:8px;height:8px;border:1px solid #dedede;background:#fff;border-radius:1px"></div>
<div class="a z " style="left:138px;top:413.08px;font-size:14.00px;line-height:22px;color:#2c69b6;font-weight:500;letter-spacing:0.00px;;transform:scale(0.4050,.5)">1212</div>
<div class="a z " style="left:232px;top:413.08px;font-size:14.00px;line-height:22px;color:#333;font-weight:500;letter-spacing:0.00px;;transform:scale(0.4050,.5)">BJD24092500002</div>
<div class="a z " style="left:326px;top:413.08px;font-size:14.00px;line-height:22px;color:#333;font-weight:500;letter-spacing:0.00px;;transform:scale(0.4150,.5)">11</div>
<div class="a z " style="left:420px;top:413.33px;font-size:13.00px;line-height:21px;color:#333;font-weight:500;letter-spacing:0.00px;;-webkit-text-stroke:0.18px currentColor">普通报价单</div>
<div class="a z " style="left:514px;top:413.08px;font-size:14.00px;line-height:22px;color:#333;font-weight:500;letter-spacing:0.00px;;transform:scale(0.4250,.5)">13</div>
<div class="a z " style="left:608px;top:413.08px;font-size:14.00px;line-height:22px;color:#333;font-weight:500;letter-spacing:0.00px;;transform:scale(0.4250,.5)">1</div>
<div class="a z " style="left:703px;top:413.33px;font-size:13.00px;line-height:21px;color:#333;font-weight:500;letter-spacing:0.00px;">-</div>
<div class="a" style="left:796.5px;top:412.88px;width:21.5px;height:11.5px;background:#7cca68;border-radius:1.5px"></div>
<div class="a zc" style="left:807.25px;top:413.58px;font-size:12.40px;line-height:20px;color:#f4fbf1;font-weight:500;letter-spacing:0.00px;;-webkit-text-stroke:0.18px currentColor">启用</div>
<div class="a z " style="left:891px;top:413.33px;font-size:13.00px;line-height:21px;color:#2c69b6;font-weight:500;letter-spacing:0.00px;-webkit-text-stroke:0.3px currentColor">编辑</div>
<div class="a" style="left:908.3px;top:415.08px;width:1px;height:7px;background:#ececec;"></div>
<div class="a z " style="left:913px;top:413.33px;font-size:13.00px;line-height:21px;color:#2c69b6;font-weight:500;letter-spacing:0.00px;-webkit-text-stroke:0.3px currentColor">禁用</div>
<div class="a" style="left:930px;top:415.08px;width:1px;height:7px;background:#ececec;"></div>
<svg class="a" style="left:935px;top:417.88px" width="9" height="3" viewBox="0 0 9 3"><g fill="#6a7487"><circle cx="1.6" cy="1.5" r=".65"/><circle cx="4.5" cy="1.5" r=".65"/><circle cx="7.4" cy="1.5" r=".65"/></g></svg>
<div class="a" style="left:91px;top:436.24px;width:913px;height:34.32px;background:#f6f7f9;"></div>
<div class="a" style="left:119px;top:449.4px;width:8px;height:8px;border:1px solid #dedede;background:#fff;border-radius:1px"></div>
<div class="a z " style="left:138px;top:447.65px;font-size:13.00px;line-height:21px;color:#2c69b6;font-weight:500;letter-spacing:0.00px;;-webkit-text-stroke:0.18px currentColor">zj测试使用</div>
<div class="a z " style="left:232px;top:447.40px;font-size:14.00px;line-height:22px;color:#333;font-weight:500;letter-spacing:0.00px;;transform:scale(0.4050,.5)">BJD24092500001</div>
<div class="a z " style="left:326px;top:447.65px;font-size:13.00px;line-height:21px;color:#333;font-weight:500;letter-spacing:0.00px;;-webkit-text-stroke:0.18px currentColor">zj测试使用</div>
<div class="a z " style="left:420px;top:447.65px;font-size:13.00px;line-height:21px;color:#333;font-weight:500;letter-spacing:0.00px;;-webkit-text-stroke:0.18px currentColor">普通报价单</div>
<div class="a z " style="left:514px;top:447.40px;font-size:14.00px;line-height:22px;color:#333;font-weight:500;letter-spacing:0.00px;;transform:scale(0.4250,.5)">2605</div>
<div class="a z " style="left:608px;top:447.40px;font-size:14.00px;line-height:22px;color:#333;font-weight:500;letter-spacing:0.00px;;transform:scale(0.4250,.5)">4</div>
<div class="a z " style="left:703px;top:447.65px;font-size:13.00px;line-height:21px;color:#333;font-weight:500;letter-spacing:0.00px;">-</div>
<div class="a" style="left:796.5px;top:447.20px;width:21.5px;height:11.5px;background:#7cca68;border-radius:1.5px"></div>
<div class="a zc" style="left:807.25px;top:447.90px;font-size:12.40px;line-height:20px;color:#f4fbf1;font-weight:500;letter-spacing:0.00px;;-webkit-text-stroke:0.18px currentColor">启用</div>
<div class="a z " style="left:891px;top:447.65px;font-size:13.00px;line-height:21px;color:#2c69b6;font-weight:500;letter-spacing:0.00px;-webkit-text-stroke:0.3px currentColor">编辑</div>
<div class="a" style="left:908.3px;top:449.40px;width:1px;height:7px;background:#ececec;"></div>
<div class="a z " style="left:913px;top:447.65px;font-size:13.00px;line-height:21px;color:#2c69b6;font-weight:500;letter-spacing:0.00px;-webkit-text-stroke:0.3px currentColor">禁用</div>
<div class="a" style="left:930px;top:449.40px;width:1px;height:7px;background:#ececec;"></div>
<svg class="a" style="left:935px;top:452.20px" width="9" height="3" viewBox="0 0 9 3"><g fill="#6a7487"><circle cx="1.6" cy="1.5" r=".65"/><circle cx="4.5" cy="1.5" r=".65"/><circle cx="7.4" cy="1.5" r=".65"/></g></svg>
<div class="a" style="left:119px;top:483.7px;width:8px;height:8px;border:1px solid #dedede;background:#fff;border-radius:1px"></div>
<div class="a z " style="left:138px;top:481.97px;font-size:13.00px;line-height:21px;color:#2c69b6;font-weight:500;letter-spacing:0.00px;;-webkit-text-stroke:0.18px currentColor">9.24测试</div>
<div class="a z " style="left:232px;top:481.72px;font-size:14.00px;line-height:22px;color:#333;font-weight:500;letter-spacing:0.00px;;transform:scale(0.4050,.5)">BJD24092400001</div>
<div class="a z " style="left:326px;top:481.72px;font-size:14.00px;line-height:22px;color:#333;font-weight:500;letter-spacing:0.00px;;transform:scale(0.4150,.5)">1</div>
<div class="a z " style="left:420px;top:481.97px;font-size:13.00px;line-height:21px;color:#333;font-weight:500;letter-spacing:0.00px;;-webkit-text-stroke:0.18px currentColor">普通报价单</div>
<div class="a z " style="left:514px;top:481.72px;font-size:14.00px;line-height:22px;color:#333;font-weight:500;letter-spacing:0.00px;;transform:scale(0.4250,.5)">10</div>
<div class="a z " style="left:608px;top:481.72px;font-size:14.00px;line-height:22px;color:#333;font-weight:500;letter-spacing:0.00px;;transform:scale(0.4250,.5)">1</div>
<div class="a z " style="left:703px;top:481.97px;font-size:13.00px;line-height:21px;color:#333;font-weight:500;letter-spacing:0.00px;">-</div>
<div class="a" style="left:796.5px;top:481.52px;width:21.5px;height:11.5px;background:#7cca68;border-radius:1.5px"></div>
<div class="a zc" style="left:807.25px;top:482.22px;font-size:12.40px;line-height:20px;color:#f4fbf1;font-weight:500;letter-spacing:0.00px;;-webkit-text-stroke:0.18px currentColor">启用</div>
<div class="a z " style="left:891px;top:481.97px;font-size:13.00px;line-height:21px;color:#2c69b6;font-weight:500;letter-spacing:0.00px;-webkit-text-stroke:0.3px currentColor">编辑</div>
<div class="a" style="left:908.3px;top:483.72px;width:1px;height:7px;background:#ececec;"></div>
<div class="a z " style="left:913px;top:481.97px;font-size:13.00px;line-height:21px;color:#2c69b6;font-weight:500;letter-spacing:0.00px;-webkit-text-stroke:0.3px currentColor">禁用</div>
<div class="a" style="left:930px;top:483.72px;width:1px;height:7px;background:#ececec;"></div>
<svg class="a" style="left:935px;top:486.52px" width="9" height="3" viewBox="0 0 9 3"><g fill="#6a7487"><circle cx="1.6" cy="1.5" r=".65"/><circle cx="4.5" cy="1.5" r=".65"/><circle cx="7.4" cy="1.5" r=".65"/></g></svg>
<div class="a" style="left:91px;top:504.88px;width:913px;height:34.32px;background:#f6f7f9;"></div>
<div class="a" style="left:119px;top:518.0px;width:8px;height:8px;border:1px solid #dedede;background:#fff;border-radius:1px"></div>
<div class="a z " style="left:138px;top:516.29px;font-size:13.00px;line-height:21px;color:#2c69b6;font-weight:500;letter-spacing:0.00px;;-webkit-text-stroke:0.18px currentColor">榴莲</div>
<div class="a z " style="left:232px;top:516.04px;font-size:14.00px;line-height:22px;color:#333;font-weight:500;letter-spacing:0.00px;;transform:scale(0.4050,.5)">BJD24092300001</div>
<div class="a z " style="left:326px;top:516.29px;font-size:13.00px;line-height:21px;color:#333;font-weight:500;letter-spacing:0.00px;">ll</div>
<div class="a z " style="left:420px;top:516.29px;font-size:13.00px;line-height:21px;color:#333;font-weight:500;letter-spacing:0.00px;;-webkit-text-stroke:0.18px currentColor">周期报价单</div>
<div class="a z " style="left:514px;top:516.04px;font-size:14.00px;line-height:22px;color:#333;font-weight:500;letter-spacing:0.00px;;transform:scale(0.4250,.5)">8</div>
<div class="a z " style="left:608px;top:516.04px;font-size:14.00px;line-height:22px;color:#333;font-weight:500;letter-spacing:0.00px;;transform:scale(0.4250,.5)">2</div>
<div class="a z " style="left:703px;top:516.29px;font-size:13.00px;line-height:21px;color:#333;font-weight:500;letter-spacing:0.00px;">-</div>
<div class="a" style="left:796.5px;top:515.84px;width:21.5px;height:11.5px;background:#7cca68;border-radius:1.5px"></div>
<div class="a zc" style="left:807.25px;top:516.54px;font-size:12.40px;line-height:20px;color:#f4fbf1;font-weight:500;letter-spacing:0.00px;;-webkit-text-stroke:0.18px currentColor">启用</div>
<div class="a z " style="left:891px;top:516.29px;font-size:13.00px;line-height:21px;color:#2c69b6;font-weight:500;letter-spacing:0.00px;-webkit-text-stroke:0.3px currentColor">编辑</div>
<div class="a" style="left:908.3px;top:518.04px;width:1px;height:7px;background:#ececec;"></div>
<div class="a z " style="left:913px;top:516.29px;font-size:13.00px;line-height:21px;color:#2c69b6;font-weight:500;letter-spacing:0.00px;-webkit-text-stroke:0.3px currentColor">禁用</div>
<div class="a" style="left:930px;top:518.04px;width:1px;height:7px;background:#ececec;"></div>
<svg class="a" style="left:935px;top:520.84px" width="9" height="3" viewBox="0 0 9 3"><g fill="#6a7487"><circle cx="1.6" cy="1.5" r=".65"/><circle cx="4.5" cy="1.5" r=".65"/><circle cx="7.4" cy="1.5" r=".65"/></g></svg>
<div class="a" style="left:111px;top:170px;width:1px;height:370px;background:#eceef2;"></div>
<div class="a z " style="left:668px;top:546.75px;font-size:13.00px;line-height:21px;color:#333;font-weight:500;letter-spacing:0.00px;;-webkit-text-stroke:0.18px currentColor">共92条记录, 每页</div>
<div class="a" style="left:717px;top:544px;width:33px;height:16px;border:1px solid #ededed;border-radius:2px;background:#fff"></div>
<div class="a z " style="left:723px;top:546.75px;font-size:13.00px;line-height:21px;color:#333;font-weight:500;letter-spacing:-0.60px;">10</div>
<svg class="a" style="left:740px;top:549.5px" width="7" height="5" viewBox="0 0 7 5"><path d="M0.8 1L3.5 3.8L6.2 1" stroke="#555" stroke-width="0.8" fill="none"/></svg>
<div class="a z " style="left:752px;top:546.75px;font-size:13.00px;line-height:21px;color:#333;font-weight:500;letter-spacing:0.00px;;-webkit-text-stroke:0.18px currentColor">条</div>
<div class="a" style="left:771px;top:544px;width:16px;height:16px;border:1px solid #f0f0f0;border-radius:2px;background:#f0f0f0"></div>
<div class="a zc" style="left:779px;top:546.75px;font-size:13.00px;line-height:21px;color:#b0b0b0;font-weight:500;letter-spacing:-0.60px;"></div>
<svg class="a" style="left:777px;top:549.5px" width="4" height="6" viewBox="0 0 4 6"><path d="M3 0.8L1 3L3 5.2" stroke="#b8b8b8" stroke-width="0.8" fill="none"/></svg>
<div class="a" style="left:793px;top:544px;width:16px;height:16px;border:1px solid #095ded;border-radius:2px;background:#095ded"></div>
<div class="a zc" style="left:801px;top:546.75px;font-size:13.00px;line-height:21px;color:#fff;font-weight:500;letter-spacing:-0.60px;">1</div>
<div class="a" style="left:814.5px;top:544px;width:16px;height:16px;border:1px solid #ededed;border-radius:2px;background:#fff"></div>
<div class="a zc" style="left:822.5px;top:546.75px;font-size:13.00px;line-height:21px;color:#333;font-weight:500;letter-spacing:-0.60px;">2</div>
<div class="a" style="left:836px;top:544px;width:16px;height:16px;border:1px solid #ededed;border-radius:2px;background:#fff"></div>
<div class="a zc" style="left:844px;top:546.75px;font-size:13.00px;line-height:21px;color:#333;font-weight:500;letter-spacing:-0.60px;">3</div>
<div class="a" style="left:857px;top:544px;width:16px;height:16px;border:1px solid #ededed;border-radius:2px;background:#fff"></div>
<div class="a zc" style="left:865px;top:546.75px;font-size:13.00px;line-height:21px;color:#333;font-weight:500;letter-spacing:-0.60px;">4</div>
<div class="a" style="left:878.5px;top:544px;width:16px;height:16px;border:1px solid #ededed;border-radius:2px;background:#fff"></div>
<div class="a zc" style="left:886.5px;top:546.75px;font-size:13.00px;line-height:21px;color:#333;font-weight:500;letter-spacing:-0.60px;">5</div>
<svg class="a" style="left:897px;top:551.5px" width="6" height="2.4" viewBox="0 0 6 2.4"><g fill="#777"><circle cx="1" cy="1.2" r=".55"/><circle cx="3" cy="1.2" r=".55"/><circle cx="5" cy="1.2" r=".55"/></g></svg>
<div class="a" style="left:905px;top:544px;width:16px;height:16px;border:1px solid #ededed;border-radius:2px;background:#fff"></div>
<div class="a zc" style="left:913px;top:546.75px;font-size:13.00px;line-height:21px;color:#333;font-weight:500;letter-spacing:-0.60px;">10</div>
<div class="a" style="left:926.5px;top:544px;width:16px;height:16px;border:1px solid #ededed;border-radius:2px;background:#fff"></div>
<div class="a zc" style="left:934.5px;top:546.75px;font-size:13.00px;line-height:21px;color:#333;font-weight:500;letter-spacing:-0.60px;"></div>
<svg class="a" style="left:932.5px;top:549.5px" width="4" height="6" viewBox="0 0 4 6"><path d="M1 0.8L3 3L1 5.2" stroke="#444" stroke-width="0.8" fill="none"/></svg>
<div class="a" style="left:950px;top:544px;width:44px;height:16px;border:1px solid #ededed;border-radius:2px;background:#fff"></div>
<div class="a" style="left:971.5px;top:545px;width:22px;height:14px;background:#f3f3f3;"></div>
<div class="a z " style="left:958px;top:546.75px;font-size:13.00px;line-height:21px;color:#333;font-weight:500;letter-spacing:0.00px;">1</div>
<div class="a z " style="left:973.5px;top:546.50px;font-size:13.60px;line-height:22px;color:#444;font-weight:500;letter-spacing:-0.20px;;-webkit-text-stroke:0.18px currentColor">/10页</div>
<div class="a" style="left:996px;top:384px;width:26px;height:25px;background:#dde8fb;border-radius:4px 0 0 4px"></div>
<svg class="a" style="left:1004px;top:388px" width="9" height="9" viewBox="0 0 9 9"><g fill="none" stroke="#3a7ef0" stroke-width="1" stroke-linejoin="round"><path d="M4.5 0.7L8.2 2.6L4.5 4.5L0.8 2.6z" fill="#a9c8fa"/><path d="M0.8 4.7L4.5 6.6L8.2 4.7"/><path d="M0.8 6.5L4.5 8.4L8.2 6.5"/></g></svg>
<div class="a zc" style="left:1008.5px;top:397.75px;font-size:13.00px;line-height:21px;color:#3d68a8;font-weight:500;letter-spacing:0.00px;;-webkit-text-stroke:0.18px currentColor">任务</div>
<div class="a" style="left:1005px;top:462px;width:16px;height:55px;background:#0f62f0;"></div>
<svg class="a" style="left:1008px;top:466px" width="10" height="10" viewBox="0 0 10 10"><circle cx="5" cy="5" r="4.2" fill="none" stroke="#fff" stroke-width="0.8"/><circle cx="3.2" cy="5" r=".45" fill="#fff"/><circle cx="5" cy="5" r=".45" fill="#fff"/><circle cx="6.8" cy="5" r=".45" fill="#fff"/></svg>
<div class="a zc" style="left:1013px;top:477.50px;font-size:13.60px;line-height:22px;color:#fff;font-weight:bold;letter-spacing:0.00px;">联</div>
<div class="a zc" style="left:1013px;top:486.40px;font-size:13.60px;line-height:22px;color:#fff;font-weight:bold;letter-spacing:0.00px;">系</div>
<div class="a zc" style="left:1013px;top:495.30px;font-size:13.60px;line-height:22px;color:#fff;font-weight:bold;letter-spacing:0.00px;">客</div>
<div class="a zc" style="left:1013px;top:504.20px;font-size:13.60px;line-height:22px;color:#fff;font-weight:bold;letter-spacing:0.00px;">服</div>
<div class="a" style="left:1021px;top:59px;width:9px;height:511px;background:#f1f1f1;"></div>
<div class="a" style="left:1021px;top:69px;width:9px;height:483.5px;background:#c6c6c6;"></div>
<svg class="a" style="left:1023px;top:62px" width="6" height="4" viewBox="0 0 6 4"><path d="M1 3L3 1L5 3" stroke="#3a3a3a" stroke-width="1.2" fill="none"/></svg>
<svg class="a" style="left:1023px;top:564px" width="6" height="4" viewBox="0 0 6 4"><path d="M1 1L3 3L5 1" stroke="#3a3a3a" stroke-width="1.2" fill="none"/></svg>
</body></html>
